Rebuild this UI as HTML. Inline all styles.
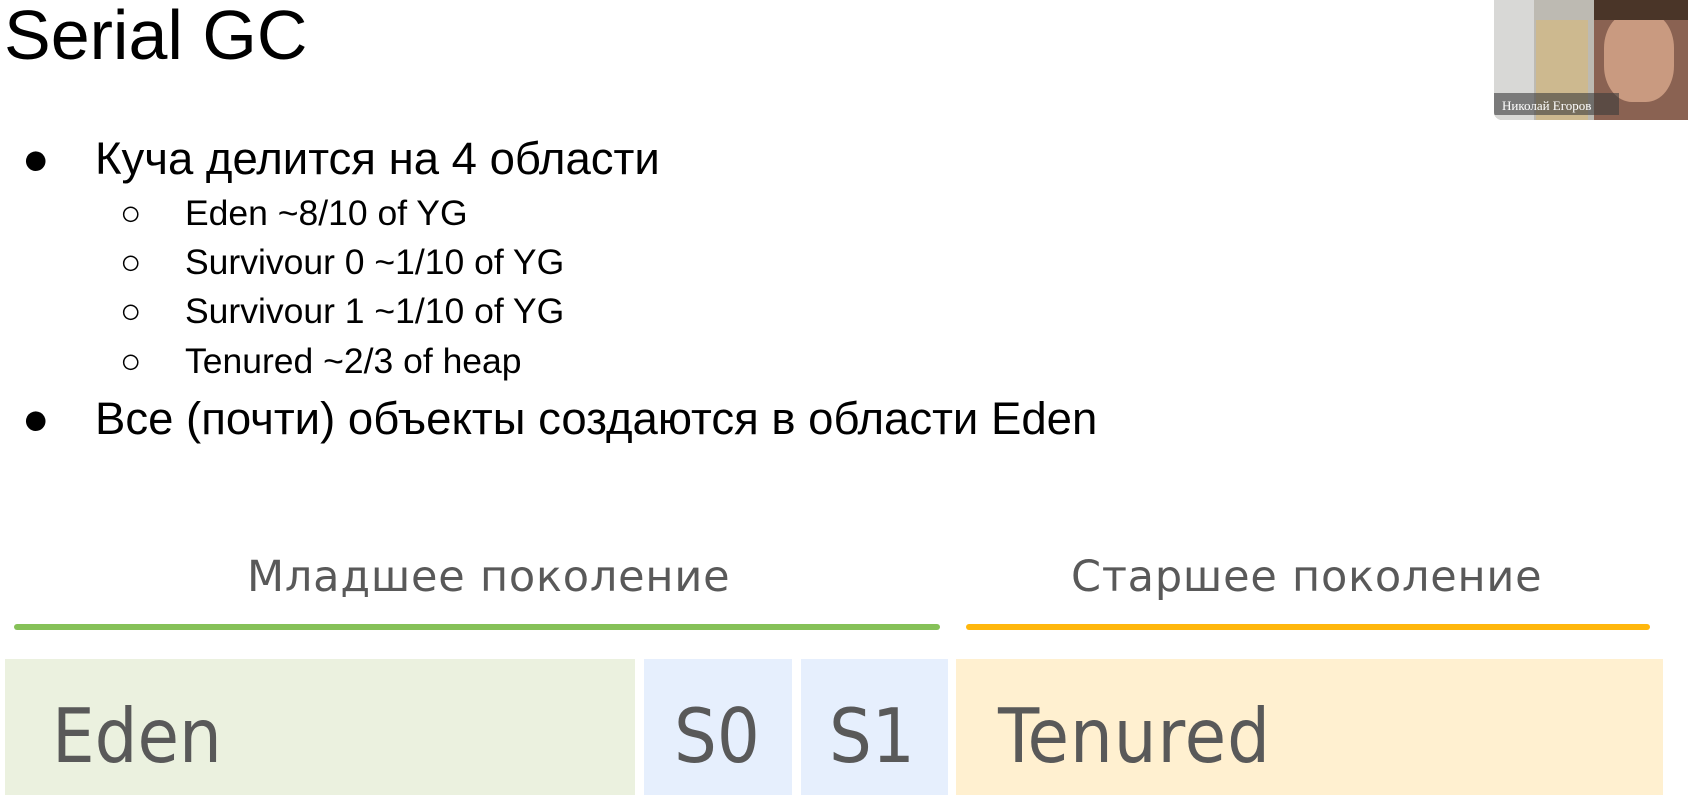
<!DOCTYPE html>
<html><head><meta charset="utf-8"><style>
body{margin:0;width:1688px;height:795px;overflow:hidden;background:#fff;position:relative;font-family:"Liberation Sans",sans-serif;color:#000}
.a{position:absolute;white-space:nowrap}
.t{font-size:45.5px;line-height:1}
.s{font-size:35.5px;line-height:1}
.g{font-family:"DejaVu Sans Condensed","DejaVu Sans",sans-serif;color:#595959}
.h{font-family:"DejaVu Sans",sans-serif;color:#595959;font-size:43px;line-height:1;letter-spacing:0.8px}
.b{position:absolute;top:659px;height:136px}
</style></head><body>
<div class="a" style="left:4px;top:-3px;font-size:70px;line-height:1.1">Serial GC</div>
<div class="a t" style="left:22px;top:136px">●</div>
<div class="a t" style="left:95px;top:136px">Куча делится на 4 области</div>
<div class="a s" style="left:120px;top:196px">○</div><div class="a s" style="left:185px;top:196px">Eden ~8/10 of YG</div>
<div class="a s" style="left:120px;top:245px">○</div><div class="a s" style="left:185px;top:245px">Survivour 0 ~1/10 of YG</div>
<div class="a s" style="left:120px;top:294px">○</div><div class="a s" style="left:185px;top:294px">Survivour 1 ~1/10 of YG</div>
<div class="a s" style="left:120px;top:344px">○</div><div class="a s" style="left:185px;top:344px">Tenured ~2/3 of heap</div>
<div class="a t" style="left:22px;top:396px">●</div>
<div class="a t" style="left:95px;top:396px">Все (почти) объекты создаются в области Eden</div>

<div class="a h" style="left:247px;top:556px">Младшее поколение</div>
<div class="a h" style="left:1071px;top:556px">Старшее поколение</div>
<div class="a" style="left:14px;top:624px;width:926px;height:6px;background:#86c158;border-radius:3px"></div>
<div class="a" style="left:966px;top:624px;width:684px;height:6px;background:#ffb70d;border-radius:3px"></div>

<div class="b" style="left:5px;width:630px;background:#ebf1df"></div>
<div class="b" style="left:644px;width:148px;background:#e6effd"></div>
<div class="b" style="left:801px;width:147px;background:#e6effd"></div>
<div class="b" style="left:956px;width:707px;background:#fff0d0"></div>
<div class="a g" style="left:52px;top:699px;font-size:75px;line-height:1">Eden</div>
<div class="a g" style="left:674px;top:699px;font-size:75px;line-height:1">S0</div>
<div class="a g" style="left:829px;top:699px;font-size:75px;line-height:1">S1</div>
<div class="a g" style="left:998px;top:699px;font-size:75px;line-height:1;letter-spacing:1px">Tenured</div>

<div class="a" style="left:1494px;top:0;width:194px;height:120px;border-radius:0 0 0 8px;overflow:hidden;background:#bdbab2">
 <div class="a" style="left:0;top:0;width:40px;height:120px;background:#d8d8d6"></div>
 <div class="a" style="left:42px;top:20px;width:52px;height:100px;background:#cdb98f"></div>
 <div class="a" style="left:100px;top:0;width:94px;height:120px;background:#8a6252"></div>
 <div class="a" style="left:110px;top:12px;width:70px;height:90px;border-radius:40%;background:#c99a80"></div>
 <div class="a" style="left:100px;top:0;width:94px;height:20px;background:#4a3528"></div>
 <div class="a" style="left:0;top:93px;width:125px;height:22px;background:rgba(60,60,60,.6)"></div>
 <div class="a" style="left:8px;top:98px;font-family:'Liberation Serif',serif;font-size:13px;color:#fff">Николай Егоров</div>
</div>
</body></html>
